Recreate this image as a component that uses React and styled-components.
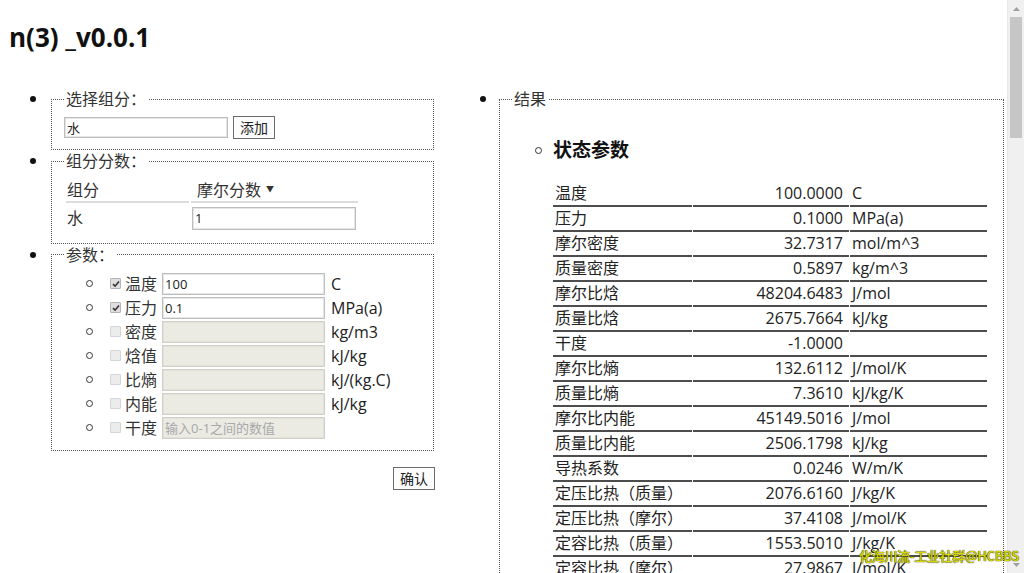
import React from "react";
import styled, { createGlobalStyle } from "styled-components";

const GlobalStyle = createGlobalStyle`
  html, body { margin: 0; padding: 0; background: #fff; }
  body {
    font-family: "Open Sans", "Noto Sans CJK SC", sans-serif;
    color: #222;
    font-size: 16px;
  }
  * { box-sizing: border-box; }
`;

const Page = styled.div`
  position: relative;
  display: flex;
  width: 1024px;
  height: 573px;
  overflow: hidden;
  background: #fff;
`;

const Main = styled.div`
  flex: 1;
  min-width: 0;
  overflow: hidden;
`;

const Title = styled.h1`
  margin: 20px 0 34px 9px;
  font-size: 26px;
  line-height: 34px;
  font-weight: 700;
  color: #111;
`;

const Columns = styled.div`
  display: flex;
  align-items: flex-start;
`;

const LeftColumn = styled.div`
  width: 435px;
  padding-left: 30px;
  flex-shrink: 0;
`;

const RightColumn = styled.div`
  padding-left: 45px;
  flex: 1;
`;

const List = styled.ul`
  list-style: none;
  margin: 0;
  padding: 0;
`;

const Item = styled.li`
  display: flex;
  align-items: flex-start;
`;

const BulletBox = styled.span`
  flex-shrink: 0;
  width: ${(p) => p.$w}px;
  height: ${(p) => p.$h}px;
  display: flex;
  align-items: center;
`;

const Dot = styled.span`
  width: ${(p) => (p.$hollow ? 7 : 6)}px;
  height: ${(p) => (p.$hollow ? 7 : 6)}px;
  border-radius: 50%;
  background: ${(p) => (p.$hollow ? "transparent" : "#111")};
  border: ${(p) => (p.$hollow ? "1px solid #333" : "none")};
`;

const Fieldset = styled.fieldset`
  margin: 0;
  min-width: 0;
  width: ${(p) => p.$w}px;
  padding: ${(p) => p.$pad || "6px 12px 10px"};
  border: 1px dotted #555;
`;

const Legend = styled.legend`
  padding: 0 2px;
  font-size: 16px;
  line-height: 22px;
  color: #333;
`;

const InlineRow = styled.div`
  display: flex;
  align-items: center;
  gap: 5px;
  height: 23px;
`;

const TextInput = styled.input`
  width: ${(p) => p.$w || 164}px;
  height: ${(p) => p.$h || 22}px;
  margin-left: ${(p) => p.$ml || 0}px;
  padding: 0 2px;
  font-family: "Open Sans", "Noto Sans CJK SC", sans-serif;
  font-size: 13px;
  color: #222;
  border: 1px solid ${(p) => (p.disabled ? "#cfcfc8" : "#bdbdbd")};
  box-shadow: inset 0 0 0 1px ${(p) => (p.disabled ? "#e2e2da" : "#e6e6e6")};
  background: ${(p) => (p.disabled ? "#ebebe4" : "#fff")};
  outline: none;
  &::placeholder { color: #a8a8a8; }
`;

const Button = styled.button`
  height: 23px;
  padding: 0 6px;
  font-family: "Noto Sans CJK SC", sans-serif;
  font-size: 14px;
  line-height: 21px;
  color: #222;
  background: #fcfcfc;
  border: 1px solid #6b6b6b;
  border-radius: 0;
`;

const FracTable = styled.table`
  border-collapse: separate;
  border-spacing: 2px 0;
`;

const HeadCell = styled.th`
  width: ${(p) => p.$w}px;
  text-align: left;
  font-weight: 400;
  font-size: 16px;
  line-height: 22px;
  padding: 0 2px 0 ${(p) => p.$pl || 1}px;
  border-bottom: 2px solid #dcdcdc;
  color: #333;
`;

const Caret = styled.span`
  font-size: 8px;
  margin-left: 5px;
  vertical-align: 4px;
`;

const BodyCell = styled.td`
  padding: 3px 0 1px ${(p) => (p.$input ? 0 : 1)}px;
  font-size: 16px;
  line-height: 22px;
  vertical-align: middle;
  color: #333;
`;

const ParamList = styled.ul`
  list-style: none;
  margin: 0;
  padding: 0 0 0 22px;
`;

const ParamItem = styled.li`
  display: flex;
  align-items: center;
  height: 24px;
`;

const Check = styled.span`
  width: 11px;
  height: 11px;
  margin: 0 4px 0 4px;
  border: 1px solid ${(p) => (p.$checked ? "#b5b5b5" : "#d4d4d4")};
  background: ${(p) => (p.$checked ? "#dedede" : "#ececec")};
  border-radius: 1px;
  display: flex;
  align-items: center;
  justify-content: center;
`;

const ParamLabel = styled.span`
  font-size: 16px;
  line-height: 22px;
  margin-right: 5px;
  color: #333;
`;

const Unit = styled.span`
  margin-left: 6px;
  font-size: 16px;
  line-height: 22px;
  color: #222;
`;

const ButtonRow = styled.div`
  display: flex;
  justify-content: flex-end;
  margin-top: 16px;
`;

const StateSection = styled.div`
  padding-left: 23px;
`;

const HeadingRow = styled.div`
  display: flex;
  align-items: center;
  margin-top: 21px;
`;

const Heading = styled.h3`
  margin: 0;
  font-size: 19px;
  line-height: 26px;
  font-weight: 700;
  color: #111;
`;

const ResultTable = styled.table`
  border-collapse: separate;
  border-spacing: 1px 0;
  margin: 19px 0 0 17px;
`;

const ResultCell = styled.td`
  width: ${(p) => p.$w}px;
  height: 25px;
  padding: 0 ${(p) => (p.$right ? 6 : 2)}px 0 2px;
  text-align: ${(p) => (p.$right ? "right" : "left")};
  font-size: 16px;
  line-height: 23px;
  border-bottom: 2px solid #4d4d4d;
  color: #222;
  white-space: nowrap;
`;

const ScrollTrack = styled.div`
  width: 17px;
  height: 573px;
  flex-shrink: 0;
  background: #f0f0f0;
  display: flex;
  flex-direction: column;
  border-left: 1px solid #e8e8e8;
`;

const ArrowButton = styled.div`
  height: 17px;
  display: flex;
  align-items: center;
  justify-content: center;
`;

const Thumb = styled.div`
  height: 121px;
  margin: 0 2px;
  background: #c6c6c6;
`;

const TrackFill = styled.div`
  flex: 1;
`;

const Watermark = styled.div`
  position: absolute;
  left: 859px;
  top: 547px;
  font-family: "Noto Sans CJK SC", sans-serif;
  font-size: 13px;
  line-height: 18px;
  letter-spacing: -0.3px;
  font-weight: 500;
  color: #d6d600;
  text-shadow: 0 0 1px #3a3a00, 0 0 1px #3a3a00;
  white-space: nowrap;
`;

const params = [
  { label: "温度", checked: true, value: "100", unit: "C" },
  { label: "压力", checked: true, value: "0.1", unit: "MPa(a)" },
  { label: "密度", unit: "kg/m3" },
  { label: "焓值", unit: "kJ/kg" },
  { label: "比熵", unit: "kJ/(kg.C)" },
  { label: "内能", unit: "kJ/kg" },
  { label: "干度", unit: "", placeholder: "输入0-1之间的数值" },
];

const results = [
  ["温度", "100.0000", "C"],
  ["压力", "0.1000", "MPa(a)"],
  ["摩尔密度", "32.7317", "mol/m^3"],
  ["质量密度", "0.5897", "kg/m^3"],
  ["摩尔比焓", "48204.6483", "J/mol"],
  ["质量比焓", "2675.7664", "kJ/kg"],
  ["干度", "-1.0000", ""],
  ["摩尔比熵", "132.6112", "J/mol/K"],
  ["质量比熵", "7.3610", "kJ/kg/K"],
  ["摩尔比内能", "45149.5016", "J/mol"],
  ["质量比内能", "2506.1798", "kJ/kg"],
  ["导热系数", "0.0246", "W/m/K"],
  ["定压比热（质量）", "2076.6160", "J/kg/K"],
  ["定压比热（摩尔）", "37.4108", "J/mol/K"],
  ["定容比热（质量）", "1553.5010", "J/kg/K"],
  ["定容比热（摩尔）", "27.9867", "J/mol/K"],
];

function CheckMark() {
  return (
    <svg width="8" height="8" viewBox="0 0 8 8">
      <path d="M1 4.2 L3.1 6.2 L7 1.6" fill="none" stroke="#333" strokeWidth="1.6" />
    </svg>
  );
}

function Triangle({ down }) {
  return (
    <svg width="7" height="4" viewBox="0 0 7 4">
      <path d={down ? "M0 0 H7 L3.5 4 Z" : "M0 4 H7 L3.5 0 Z"} fill="#a0a0a0" />
    </svg>
  );
}

export default function App() {
  return (
    <>
      <GlobalStyle />
      <Page>
        <Main>
          <Title>n(3) _v0.0.1</Title>
          <Columns>
            <LeftColumn>
              <List>
                <Item>
                  <BulletBox $w={21} $h={22}><Dot /></BulletBox>
                  <Fieldset $w={383}>
                    <Legend>选择组分：</Legend>
                    <InlineRow>
                      <TextInput defaultValue="水" $w={164} $h={21} />
                      <Button>添加</Button>
                    </InlineRow>
                  </Fieldset>
                </Item>
                <Item>
                  <BulletBox $w={21} $h={22}><Dot /></BulletBox>
                  <Fieldset $w={383} $pad="6px 12px 12px">
                    <Legend>组分分数：</Legend>
                    <FracTable>
                      <thead>
                        <tr>
                          <HeadCell $w={123}>组分</HeadCell>
                          <HeadCell $w={167} $pl={6}>摩尔分数<Caret>▼</Caret></HeadCell>
                        </tr>
                      </thead>
                      <tbody>
                        <tr>
                          <BodyCell>水</BodyCell>
                          <BodyCell $input>
                            <TextInput defaultValue="1" $w={164} $h={23} $ml={1} />
                          </BodyCell>
                        </tr>
                      </tbody>
                    </FracTable>
                  </Fieldset>
                </Item>
                <Item>
                  <BulletBox $w={21} $h={22}><Dot /></BulletBox>
                  <Fieldset $w={383}>
                    <Legend>参数：</Legend>
                    <ParamList>
                      {params.map((p) => (
                        <ParamItem key={p.label}>
                          <BulletBox $w={20} $h={24}><Dot $hollow /></BulletBox>
                          <Check $checked={p.checked}>{p.checked && <CheckMark />}</Check>
                          <ParamLabel>{p.label}</ParamLabel>
                          <TextInput
                            $w={163}
                            $h={22}
                            disabled={!p.checked}
                            defaultValue={p.value || ""}
                            placeholder={p.placeholder}
                          />
                          <Unit>{p.unit}</Unit>
                        </ParamItem>
                      ))}
                    </ParamList>
                  </Fieldset>
                </Item>
              </List>
              <ButtonRow>
                <Button>确认</Button>
              </ButtonRow>
            </LeftColumn>
            <RightColumn>
              <List>
                <Item>
                  <BulletBox $w={19} $h={22}><Dot /></BulletBox>
                  <Fieldset $w={505} $pad="6px 12px 0">
                    <Legend>结果</Legend>
                    <StateSection>
                      <HeadingRow>
                        <BulletBox $w={18} $h={26}><Dot $hollow /></BulletBox>
                        <Heading>状态参数</Heading>
                      </HeadingRow>
                      <ResultTable>
                        <tbody>
                          {results.map(([n, v, u]) => (
                            <tr key={n}>
                              <ResultCell $w={139}>{n}</ResultCell>
                              <ResultCell $w={156} $right>{v}</ResultCell>
                              <ResultCell $w={137}>{u}</ResultCell>
                            </tr>
                          ))}
                        </tbody>
                      </ResultTable>
                    </StateSection>
                  </Fieldset>
                </Item>
              </List>
            </RightColumn>
          </Columns>
        </Main>
        <ScrollTrack>
          <ArrowButton><Triangle /></ArrowButton>
          <Thumb />
          <TrackFill />
          <ArrowButton><Triangle down /></ArrowButton>
        </ScrollTrack>
        <Watermark>化海川流-工业社群@HCBBS</Watermark>
      </Page>
    </>
  );
}
